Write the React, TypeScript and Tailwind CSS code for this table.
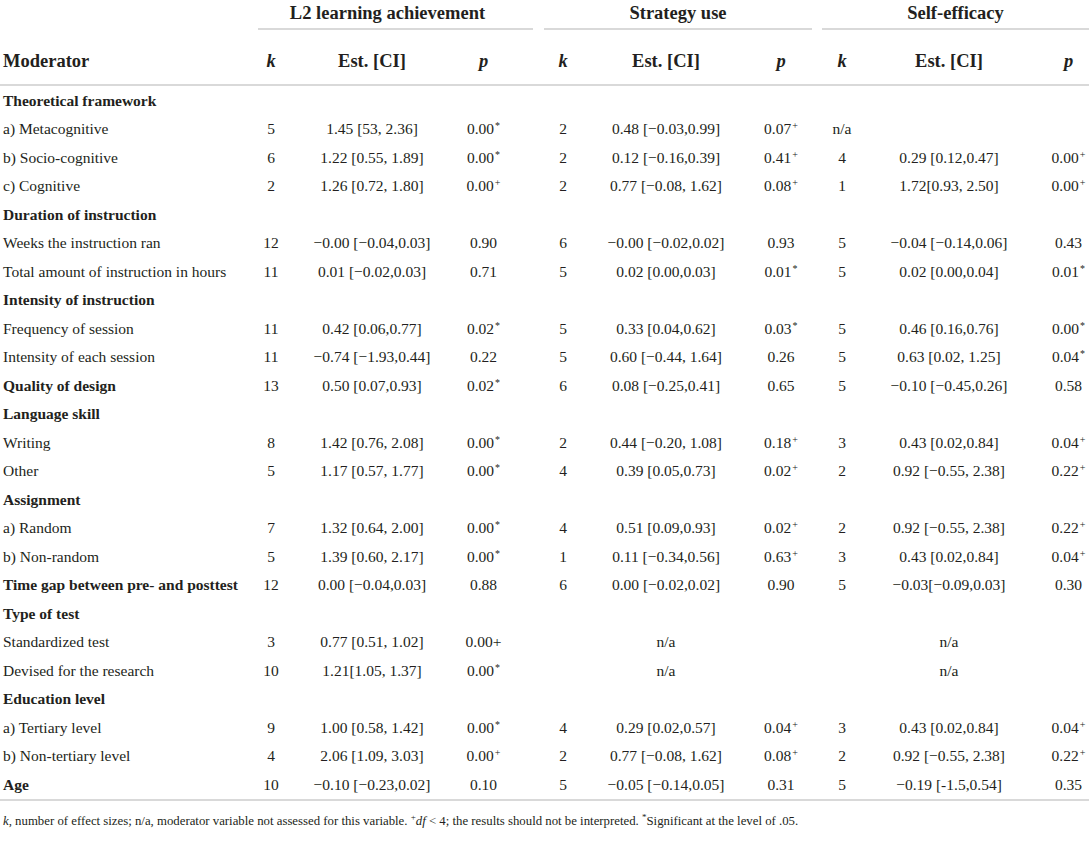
import React from "react";

type Cell = React.ReactNode;
type Row = {
  label: string;
  bold?: boolean;
  c?: Cell[]; // 9 cells: k1 e1 p1 k2 e2 p2 k3 e3 p3
};

const S = ({ t }: { t: string }) => (
  <sup className="text-[10px] ml-[1px]">{t}</sup>
);
const st = (v: string) => (
  <>
    {v}
    <S t="*" />
  </>
);
const pl = (v: string) => (
  <>
    {v}
    <S t="+" />
  </>
);

const rows: Row[] = [
  { label: "Theoretical framework", bold: true },
  {
    label: "a) Metacognitive",
    c: ["5", "1.45 [53, 2.36]", st("0.00"), "2", "0.48 [−0.03,0.99]", pl("0.07"), "n/a", "", ""],
  },
  {
    label: "b) Socio-cognitive",
    c: ["6", "1.22 [0.55, 1.89]", st("0.00"), "2", "0.12 [−0.16,0.39]", pl("0.41"), "4", "0.29 [0.12,0.47]", pl("0.00")],
  },
  {
    label: "c) Cognitive",
    c: ["2", "1.26 [0.72, 1.80]", pl("0.00"), "2", "0.77 [−0.08, 1.62]", pl("0.08"), "1", "1.72[0.93, 2.50]", pl("0.00")],
  },
  { label: "Duration of instruction", bold: true },
  {
    label: "Weeks the instruction ran",
    c: ["12", "−0.00 [−0.04,0.03]", "0.90", "6", "−0.00 [−0.02,0.02]", "0.93", "5", "−0.04 [−0.14,0.06]", "0.43"],
  },
  {
    label: "Total amount of instruction in hours",
    c: ["11", "0.01 [−0.02,0.03]", "0.71", "5", "0.02 [0.00,0.03]", st("0.01"), "5", "0.02 [0.00,0.04]", st("0.01")],
  },
  { label: "Intensity of instruction", bold: true },
  {
    label: "Frequency of session",
    c: ["11", "0.42 [0.06,0.77]", st("0.02"), "5", "0.33 [0.04,0.62]", st("0.03"), "5", "0.46 [0.16,0.76]", st("0.00")],
  },
  {
    label: "Intensity of each session",
    c: ["11", "−0.74 [−1.93,0.44]", "0.22", "5", "0.60 [−0.44, 1.64]", "0.26", "5", "0.63 [0.02, 1.25]", st("0.04")],
  },
  {
    label: "Quality of design",
    bold: true,
    c: ["13", "0.50 [0.07,0.93]", st("0.02"), "6", "0.08 [−0.25,0.41]", "0.65", "5", "−0.10 [−0.45,0.26]", "0.58"],
  },
  { label: "Language skill", bold: true },
  {
    label: "Writing",
    c: ["8", "1.42 [0.76, 2.08]", st("0.00"), "2", "0.44 [−0.20, 1.08]", pl("0.18"), "3", "0.43 [0.02,0.84]", pl("0.04")],
  },
  {
    label: "Other",
    c: ["5", "1.17 [0.57, 1.77]", st("0.00"), "4", "0.39 [0.05,0.73]", pl("0.02"), "2", "0.92 [−0.55, 2.38]", pl("0.22")],
  },
  { label: "Assignment", bold: true },
  {
    label: "a) Random",
    c: ["7", "1.32 [0.64, 2.00]", st("0.00"), "4", "0.51 [0.09,0.93]", pl("0.02"), "2", "0.92 [−0.55, 2.38]", pl("0.22")],
  },
  {
    label: "b) Non-random",
    c: ["5", "1.39 [0.60, 2.17]", st("0.00"), "1", "0.11 [−0.34,0.56]", pl("0.63"), "3", "0.43 [0.02,0.84]", pl("0.04")],
  },
  {
    label: "Time gap between pre- and posttest",
    bold: true,
    c: ["12", "0.00 [−0.04,0.03]", "0.88", "6", "0.00 [−0.02,0.02]", "0.90", "5", "−0.03[−0.09,0.03]", "0.30"],
  },
  { label: "Type of test", bold: true },
  {
    label: "Standardized test",
    c: ["3", "0.77 [0.51, 1.02]", "0.00+", "", "n/a", "", "", "n/a", ""],
  },
  {
    label: "Devised for the research",
    c: ["10", "1.21[1.05, 1.37]", st("0.00"), "", "n/a", "", "", "n/a", ""],
  },
  { label: "Education level", bold: true },
  {
    label: "a) Tertiary level",
    c: ["9", "1.00 [0.58, 1.42]", st("0.00"), "4", "0.29 [0.02,0.57]", pl("0.04"), "3", "0.43 [0.02,0.84]", pl("0.04")],
  },
  {
    label: "b) Non-tertiary level",
    c: ["4", "2.06 [1.09, 3.03]", pl("0.00"), "2", "0.77 [−0.08, 1.62]", pl("0.08"), "2", "0.92 [−0.55, 2.38]", pl("0.22")],
  },
  {
    label: "Age",
    bold: true,
    c: ["10", "−0.10 [−0.23,0.02]", "0.10", "5", "−0.05 [−0.14,0.05]", "0.31", "5", "−0.19 [-1.5,0.54]", "0.35"],
  },
];

const GRID =
  "grid grid-cols-[258px_32px_164px_79px_11px_38px_168px_62px_10px_40px_174px_53px]";

const cellPad = ["pr-[6px]", "", "pr-[20px]", "", "", "", "", "", "pl-[12px]"];

function DataCells({ c }: { c?: Cell[] }) {
  const cells = c ?? ["", "", "", "", "", "", "", "", ""];
  const out: React.ReactNode[] = [];
  cells.forEach((v, i) => {
    if (i === 3 || i === 6) out.push(<div key={"g" + i} />);
    out.push(
      <div key={i} className={"text-center whitespace-nowrap " + cellPad[i]}>
        {v}
      </div>
    );
  });
  return <>{out}</>;
}

export default function App() {
  return (
    <div
      className="w-[1089px] h-[842px] bg-white text-[#231f20] overflow-hidden"
      style={{ fontFamily: '"Liberation Serif", "Times New Roman", serif' }}
    >
      {/* group header */}
      <div className={GRID + " h-[30px] text-[18.5px] font-bold"}>
        <div />
        <div className="col-span-3 flex items-center justify-center pr-[16px] border-b-2 border-[#d9d9d9]">
          L2 learning achievement
        </div>
        <div />
        <div className="col-span-3 flex items-center justify-center border-b-2 border-[#d9d9d9]">
          Strategy use
        </div>
        <div />
        <div className="col-span-3 flex items-center justify-center border-b-2 border-[#d9d9d9]">
          Self-efficacy
        </div>
      </div>
      {/* column header */}
      <div className={GRID + " h-[56px] items-center pt-[9px] text-[18.5px] font-bold border-b-2 border-[#d9d9d9]"}>
        <div className="pl-[3px]">Moderator</div>
        <div className="text-center italic pr-[6px]">k</div>
        <div className="text-center">Est. [CI]</div>
        <div className="text-center italic pr-[20px]">p</div>
        <div />
        <div className="text-center italic">k</div>
        <div className="text-center">Est. [CI]</div>
        <div className="text-center italic">p</div>
        <div />
        <div className="text-center italic">k</div>
        <div className="text-center">Est. [CI]</div>
        <div className="text-center italic pl-[12px]">p</div>
      </div>
      {/* body */}
      <div className="text-[15.5px] border-b-2 border-[#d9d9d9]">
        {rows.map((r, i) => (
          <div key={i} className={GRID + " h-[28.5px] items-center"}>
            <div className={"pl-[3px] whitespace-nowrap " + (r.bold ? "font-bold" : "")}>
              {r.label}
            </div>
            <DataCells c={r.c} />
          </div>
        ))}
      </div>
      {/* footnote */}
      <div className="pl-[3px] pt-[11px] text-[12.8px] whitespace-nowrap">
        <span className="italic">k</span>, number of effect sizes; n/a, moderator variable not
        assessed for this variable. <sup className="text-[9px]">+</sup>
        <span className="italic">df</span> &lt; 4; the results should not be interpreted.{" "}
        <sup className="text-[9px]">*</sup>Significant at the level of .05.
      </div>
    </div>
  );
}
